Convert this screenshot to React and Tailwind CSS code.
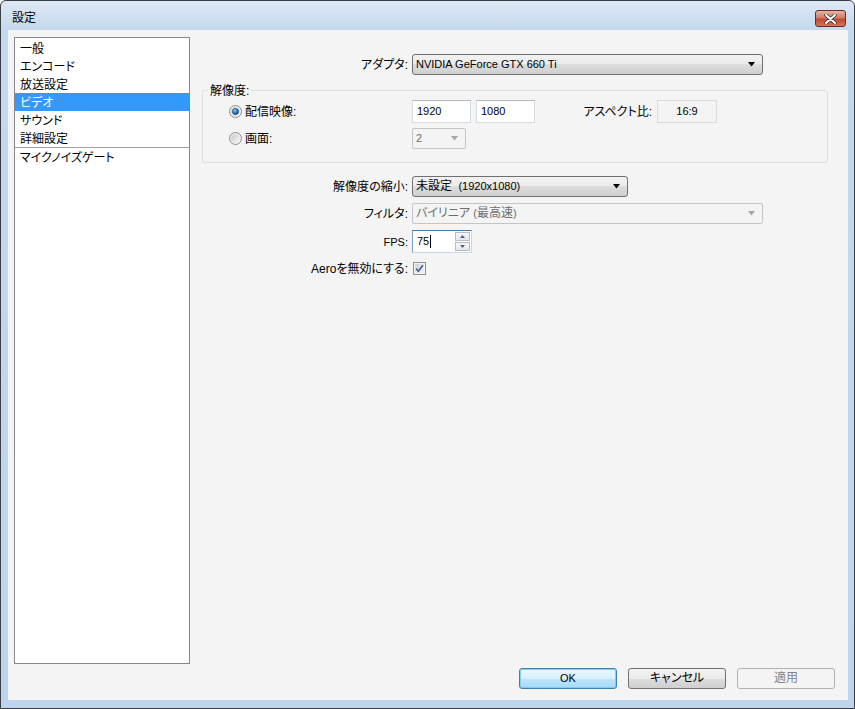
import React from 'react';

const FONT = "font-['Liberation_Sans','Noto_Sans_CJK_JP',sans-serif]";

const Radio = ({ checked }) => (
  <svg width="13" height="13" viewBox="0 0 13 13" className="shrink-0">
    <defs>
      <linearGradient id={checked ? 'rin1' : 'rin0'} x1="0" y1="0" x2="1" y2="1">
        <stop offset="0" stopColor="#c9cbce" />
        <stop offset="1" stopColor="#f7f7f7" />
      </linearGradient>
      <radialGradient id="rdot" cx="0.4" cy="0.35" r="0.7">
        <stop offset="0" stopColor="#8fd0ff" />
        <stop offset="0.5" stopColor="#2b7fd0" />
        <stop offset="1" stopColor="#0e3f7a" />
      </radialGradient>
    </defs>
    <circle cx="6.5" cy="6.5" r="6" fill="#f2f2f2" stroke="#8a8c8f" strokeWidth="1" />
    <circle cx="6.5" cy="6.5" r="4.6" fill={`url(#${checked ? 'rin1' : 'rin0'})`} />
    {checked && <circle cx="6.5" cy="6.5" r="3.1" fill="url(#rdot)" stroke="#17406f" strokeWidth="0.6" />}
  </svg>
);

const Check = () => (
  <svg width="13" height="13" viewBox="0 0 13 13">
    <defs>
      <linearGradient id="cbg" x1="0" y1="0" x2="1" y2="1">
        <stop offset="0" stopColor="#cfd4da" />
        <stop offset="1" stopColor="#f4f5f7" />
      </linearGradient>
    </defs>
    <rect x="0.5" y="0.5" width="12" height="12" fill="#f4f4f4" stroke="#8f8f8f" />
    <rect x="2" y="2" width="9" height="9" fill="url(#cbg)" />
    <path d="M3.2 6.6 L5.4 9.2 L9.9 3.2" fill="none" stroke="#4c5f94" strokeWidth="1.7" />
  </svg>
);

const Arrow = ({ color = '#000' }) => (
  <svg width="8" height="5" viewBox="0 0 8 5" className="shrink-0">
    <path d="M0 0 H7 L3.5 4.5 Z" fill={color} />
  </svg>
);

const Select = ({ width, children, disabled }) =>
  disabled ? (
    <div
      style={{ width }}
      className="h-[21px] border border-[#c2c5c9] rounded-[2px] bg-[#f4f4f4] flex items-center pl-[3px] pr-[6px] text-[#6d6d6d]"
    >
      <div className="flex-1 truncate">{children}</div>
      <Arrow color="#a7a7a7" />
    </div>
  ) : (
    <div
      style={{ width }}
      className="h-[21px] border border-[#707070] rounded-[3px] bg-[linear-gradient(to_bottom,#f2f2f2,#ebebeb_50%,#dddddd_50%,#cfcfcf)] flex items-center pl-[3px] pr-[6px] text-black"
    >
      <div className="flex-1 truncate">{children}</div>
      <Arrow />
    </div>
  );

const Label = ({ children, className = '' }) => (
  <div className={`w-[210px] shrink-0 text-right pr-[4px] pt-px ${className}`}>{children}</div>
);

const Button = ({ children, variant }) => {
  const cls =
    variant === 'default'
      ? 'border-[#3c7fb1] bg-[linear-gradient(to_bottom,#eaf6fd,#d9f0fc_50%,#bee6fd_50%,#a7d9f5)] text-black shadow-[inset_0_0_0_1px_#7ed0f4]'
      : variant === 'disabled'
      ? 'border-[#adb2b5] bg-[#f4f4f4] text-[#838383]'
      : 'border-[#707070] bg-[linear-gradient(to_bottom,#f2f2f2,#ebebeb_50%,#dddddd_50%,#cfcfcf)] text-black';
  return (
    <div className={`w-[98px] h-[21px] border rounded-[3px] flex items-center justify-center ${cls}`}>
      {children}
    </div>
  );
};

const items = ['一般', 'エンコード', '放送設定', 'ビデオ', 'サウンド', '詳細設定'];

export default function App() {
  return (
    <div
      className={`${FONT} [font-feature-settings:'palt'] text-[12px] leading-[15px] w-[855px] h-[709px] border border-[#3a3f46] rounded-t-[6px] flex flex-col bg-[linear-gradient(to_bottom,#dfe9f5,#c4d8ee_29px,#bfd5ee)] overflow-hidden`}
    >
      {/* Title bar */}
      <div className="h-[29px] flex items-start justify-between pl-[11px] pr-[8px] shrink-0">
        <span className="pt-[10px] text-black">設定</span>
        <div className="mt-[9px] w-[31px] h-[17px] rounded-[3px] border border-[#6b2a22] bg-[linear-gradient(to_bottom,#eab3a6,#d47a66_45%,#c04a33_55%,#d3745b)] flex items-center justify-center">
          <svg width="13" height="10" viewBox="0 0 13 10">
            <path d="M2 1 L11 9 M11 1 L2 9" stroke="#3b3b3b" strokeWidth="3.6" strokeLinecap="round" />
            <path d="M2 1 L11 9 M11 1 L2 9" stroke="#ffffff" strokeWidth="2" strokeLinecap="round" />
          </svg>
        </div>
      </div>

      {/* Content */}
      <div className="flex-1 ml-[7px] mr-[6px] mb-[8px] bg-[#f4f4f4] flex flex-col pt-[7px] pl-[6px]">
        <div className="flex">
          {/* Sidebar */}
          <div className="w-[176px] h-[627px] border border-[#828790] bg-white shrink-0 pt-px">
            {items.map((it) => (
              <div
                key={it}
                className={`h-[18px] flex items-center pl-[5px] pt-[2px] ${
                  it === 'ビデオ' ? 'bg-[#3399ff] text-white' : 'text-black'
                }`}
              >
                {it}
              </div>
            ))}
            <div className="h-px bg-[#a0a0a0]" />
            <div className="h-[18px] flex items-center pl-[5px] pt-[2px] text-black">マイクノイズゲート</div>
          </div>

          {/* Main panel */}
          <div className="ml-[12px] w-[626px] pt-[17px] text-black">
            <div className="flex items-center h-[21px]">
              <Label>アダプタ:</Label>
              <Select width={351}>
                <span className="text-[11px]">NVIDIA GeForce GTX 660 Ti</span>
              </Select>
            </div>

            <fieldset className="mt-[7px] border border-[#d5dfe5] rounded-[3px] pb-[13px]">
              <legend className="ml-[5px] px-[2px] pt-[2px]">解像度:</legend>
              <div className="flex items-center h-[23px] mt-[1px]">
                <div className="w-[209px] shrink-0 flex items-center gap-[3px] pl-[26px]">
                  <Radio checked />
                  <span className="pt-px">配信映像:</span>
                </div>
                <div className="w-[59px] h-[23px] bg-white border border-[#d7dce3] border-t-[#b4b9c0] flex items-center pl-[4px] text-[11px]">
                  1920
                </div>
                <div className="ml-[5px] w-[59px] h-[23px] bg-white border border-[#d7dce3] border-t-[#b4b9c0] flex items-center pl-[4px] text-[11px]">
                  1080
                </div>
                <div className="w-[117px] text-right pt-px">アスペクト比:</div>
                <div className="ml-[5px] w-[60px] h-[23px] bg-[#f4f4f4] border border-[#d7dce3] flex items-center justify-center text-[11px]">
                  16:9
                </div>
              </div>
              <div className="flex items-center h-[21px] mt-[5px]">
                <div className="w-[209px] shrink-0 flex items-center gap-[3px] pl-[26px]">
                  <Radio />
                  <span className="pt-px">画面:</span>
                </div>
                <Select width={54} disabled>
                  <span className="text-[11px]">2</span>
                </Select>
              </div>
            </fieldset>

            <div className="flex items-center h-[21px] mt-[13px]">
              <Label>解像度の縮小:</Label>
              <Select width={216}>
                未設定 <span className="text-[11px]">&nbsp;(1920x1080)</span>
              </Select>
            </div>

            <div className="flex items-center h-[21px] mt-[6px]">
              <Label>フィルタ:</Label>
              <Select width={351} disabled>
                バイリニア <span className="text-[11px]">(</span>最高速<span className="text-[11px]">)</span>
              </Select>
            </div>

            <div className="flex items-center h-[23px] mt-[6px]">
              <Label className="text-[11px]">FPS:</Label>
              <div className="w-[60px] h-[23px] bg-white border border-[#c5d7ea] border-t-[#3d7bad] border-l-[#7da2ce] flex items-center">
                <div className="flex-1 pl-[4px] text-[11px] flex items-center">
                  75<span className="w-px h-[13px] bg-black ml-px" />
                </div>
                <div className="flex flex-col gap-px mr-px">
                  <div className="w-[15px] h-[9px] border border-[#b7bcc3] bg-[linear-gradient(to_bottom,#f6f7f9,#e4e8ee)] flex items-center justify-center">
                    <svg width="5" height="3" viewBox="0 0 5 3">
                      <path d="M0 3 H5 L2.5 0 Z" fill="#4d6185" />
                    </svg>
                  </div>
                  <div className="w-[15px] h-[9px] border border-[#b7bcc3] bg-[linear-gradient(to_bottom,#f6f7f9,#e4e8ee)] flex items-center justify-center">
                    <svg width="5" height="3" viewBox="0 0 5 3">
                      <path d="M0 0 H5 L2.5 3 Z" fill="#4d6185" />
                    </svg>
                  </div>
                </div>
              </div>
            </div>

            <div className="flex items-center h-[15px] mt-[8px]">
              <Label>Aeroを無効にする:</Label>
              <div className="ml-px">
                <Check />
              </div>
            </div>
          </div>
        </div>

        {/* Buttons */}
        <div className="flex justify-end gap-[11px] pr-[13px] mt-[4px]">
          <Button variant="default">
            <span className="text-[11px]">OK</span>
          </Button>
          <Button>キャンセル</Button>
          <Button variant="disabled">適用</Button>
        </div>
      </div>
    </div>
  );
}
